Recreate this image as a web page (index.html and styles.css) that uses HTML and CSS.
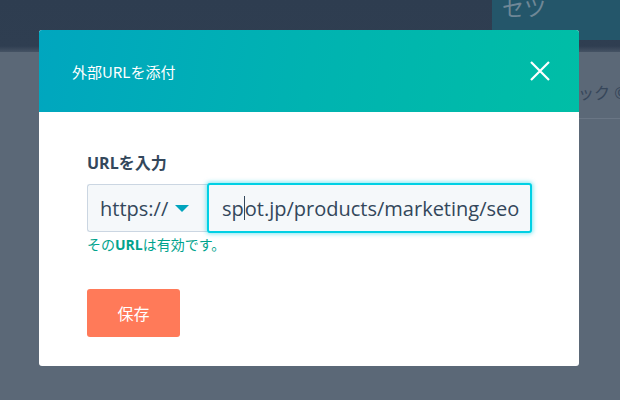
FILE: index.html
```html
<!DOCTYPE html>
<html lang="ja">
<head>
    <meta charset="UTF-8">
    <title>外部URLを添付</title>
    <link rel="stylesheet" href="styles.css">
</head>
<body>
    <div class="page">
        <div class="topbar">
            <div class="topbar-side">セツ</div>
        </div>
        <div class="page-body">
            <div class="side-panel">
                <div class="side-label">ック ©</div>
            </div>
        </div>
    </div>

    <div class="modal-overlay">
        <div class="modal">
            <div class="modal-header">
                <h1>外部URLを添付</h1>
                <button class="close-btn" aria-label="閉じる">
                    <svg width="20" height="20" viewBox="0 0 20 20">
                        <path d="M1 1 L19 19 M19 1 L1 19" stroke="#fff" stroke-width="2.2" fill="none"/>
                    </svg>
                </button>
            </div>
            <div class="modal-body">
                <label class="field-label" for="urlInput">URLを入力</label>
                <div class="url-row">
                    <div class="protocol">
                        <span>https://</span>
                        <span class="caret"></span>
                    </div>
                    <div class="url-input" id="urlInput">
                        <span>sp</span><span class="cursor"></span><span>ot.jp/products/marketing/seo</span>
                    </div>
                </div>
                <p class="valid-msg">その<b>URL</b>は有効です。</p>
                <button class="save-btn">保存</button>
            </div>
        </div>
    </div>
</body>
</html>
```

FILE: styles.css
```css
body {
    margin: 0;
    font-family: "Open Sans", "Noto Sans CJK JP", sans-serif;
    background-color: #5b6877;
    width: 620px;
    height: 400px;
    overflow: hidden;
    position: relative;
}
.page {
    height: 400px;
    display: flex;
    flex-direction: column;
}
.topbar {
    height: 52px;
    background: linear-gradient(to bottom, #2e3d50 0, #2f3e51 46px, #5b6877 58px);
    display: flex;
    justify-content: flex-end;
}
.topbar-side {
    width: 128px;
    height: 40px;
    background-color: #24566a;
    color: #6f8796;
    font-size: 22px;
    line-height: 14px;
    padding-left: 10px;
    overflow: hidden;
    box-sizing: border-box;
}
.page-body {
    flex: 1;
    display: flex;
    justify-content: flex-end;
}
.side-panel {
    width: 128px;
    padding-top: 28px;
    box-sizing: border-box;
}
.side-label {
    color: #36465a;
    font-size: 16px;
    padding-left: 86px;
    padding-bottom: 14px;
    border-bottom: 1px solid #6a7685;
    white-space: nowrap;
}
.modal-overlay {
    position: absolute;
    top: 0;
    left: 0;
    width: 620px;
    height: 400px;
    display: flex;
    justify-content: center;
    padding: 30px 2px 0 0;
    box-sizing: border-box;
}
.modal {
    width: 540px;
    height: 336px;
    background-color: #fff;
    border-radius: 3px;
    overflow: hidden;
}
.modal-header {
    height: 82px;
    background: linear-gradient(100deg, #00a6bf 0%, #00b3b1 50%, #00bea6 100%);
    display: flex;
    align-items: center;
    justify-content: space-between;
    padding: 0 29px 0 33px;
}
.modal-header h1 {
    margin: 0;
    color: #fff;
    font-size: 15px;
    font-weight: 400;
    font-family: "Noto Sans CJK JP", sans-serif;
}
.close-btn {
    background: none;
    border: none;
    padding: 0;
    width: 20px;
    height: 20px;
    cursor: pointer;
}
.modal-body {
    padding: 40px 47px 0 48px;
    color: #33475b;
}
.field-label {
    display: block;
    font-size: 16px;
    line-height: 22px;
    font-weight: bold;
    margin-bottom: 9px;
}
.url-row {
    display: flex;
    height: 50px;
}
.protocol {
    width: 120px;
    margin-top: 1px;
    height: 48px;
    box-sizing: border-box;
    background-color: #f5f8fa;
    border: 1px solid #cbd6e2;
    border-right: none;
    border-radius: 3px 0 0 3px;
    display: flex;
    align-items: center;
    padding-left: 12px;
    font-size: 20px;
}
.caret {
    margin-left: 7px;
    width: 0;
    height: 0;
    border-left: 7px solid transparent;
    border-right: 7px solid transparent;
    border-top: 7px solid #00a4bd;
}
.url-input {
    flex: 1;
    box-sizing: border-box;
    background-color: #f5f8fa;
    border: 2px solid #00d0e4;
    border-radius: 3px;
    box-shadow: 0 0 4px 1px rgba(0, 208, 228, 0.5);
    display: flex;
    align-items: center;
    padding-left: 13px;
    font-size: 20px;
    white-space: nowrap;
    overflow: hidden;
}
.cursor {
    display: inline-block;
    width: 1px;
    height: 24px;
    background-color: #33475b;
}
.valid-msg {
    margin: 2px 0 0;
    font-size: 14px;
    line-height: 20px;
    color: #00a38d;
}
.save-btn {
    margin-top: 34px;
    width: 93px;
    height: 48px;
    background-color: #ff7a59;
    color: #fff;
    border: none;
    border-radius: 3px;
    font-size: 16px;
    font-family: "Noto Sans CJK JP", sans-serif;
    cursor: pointer;
}
```
